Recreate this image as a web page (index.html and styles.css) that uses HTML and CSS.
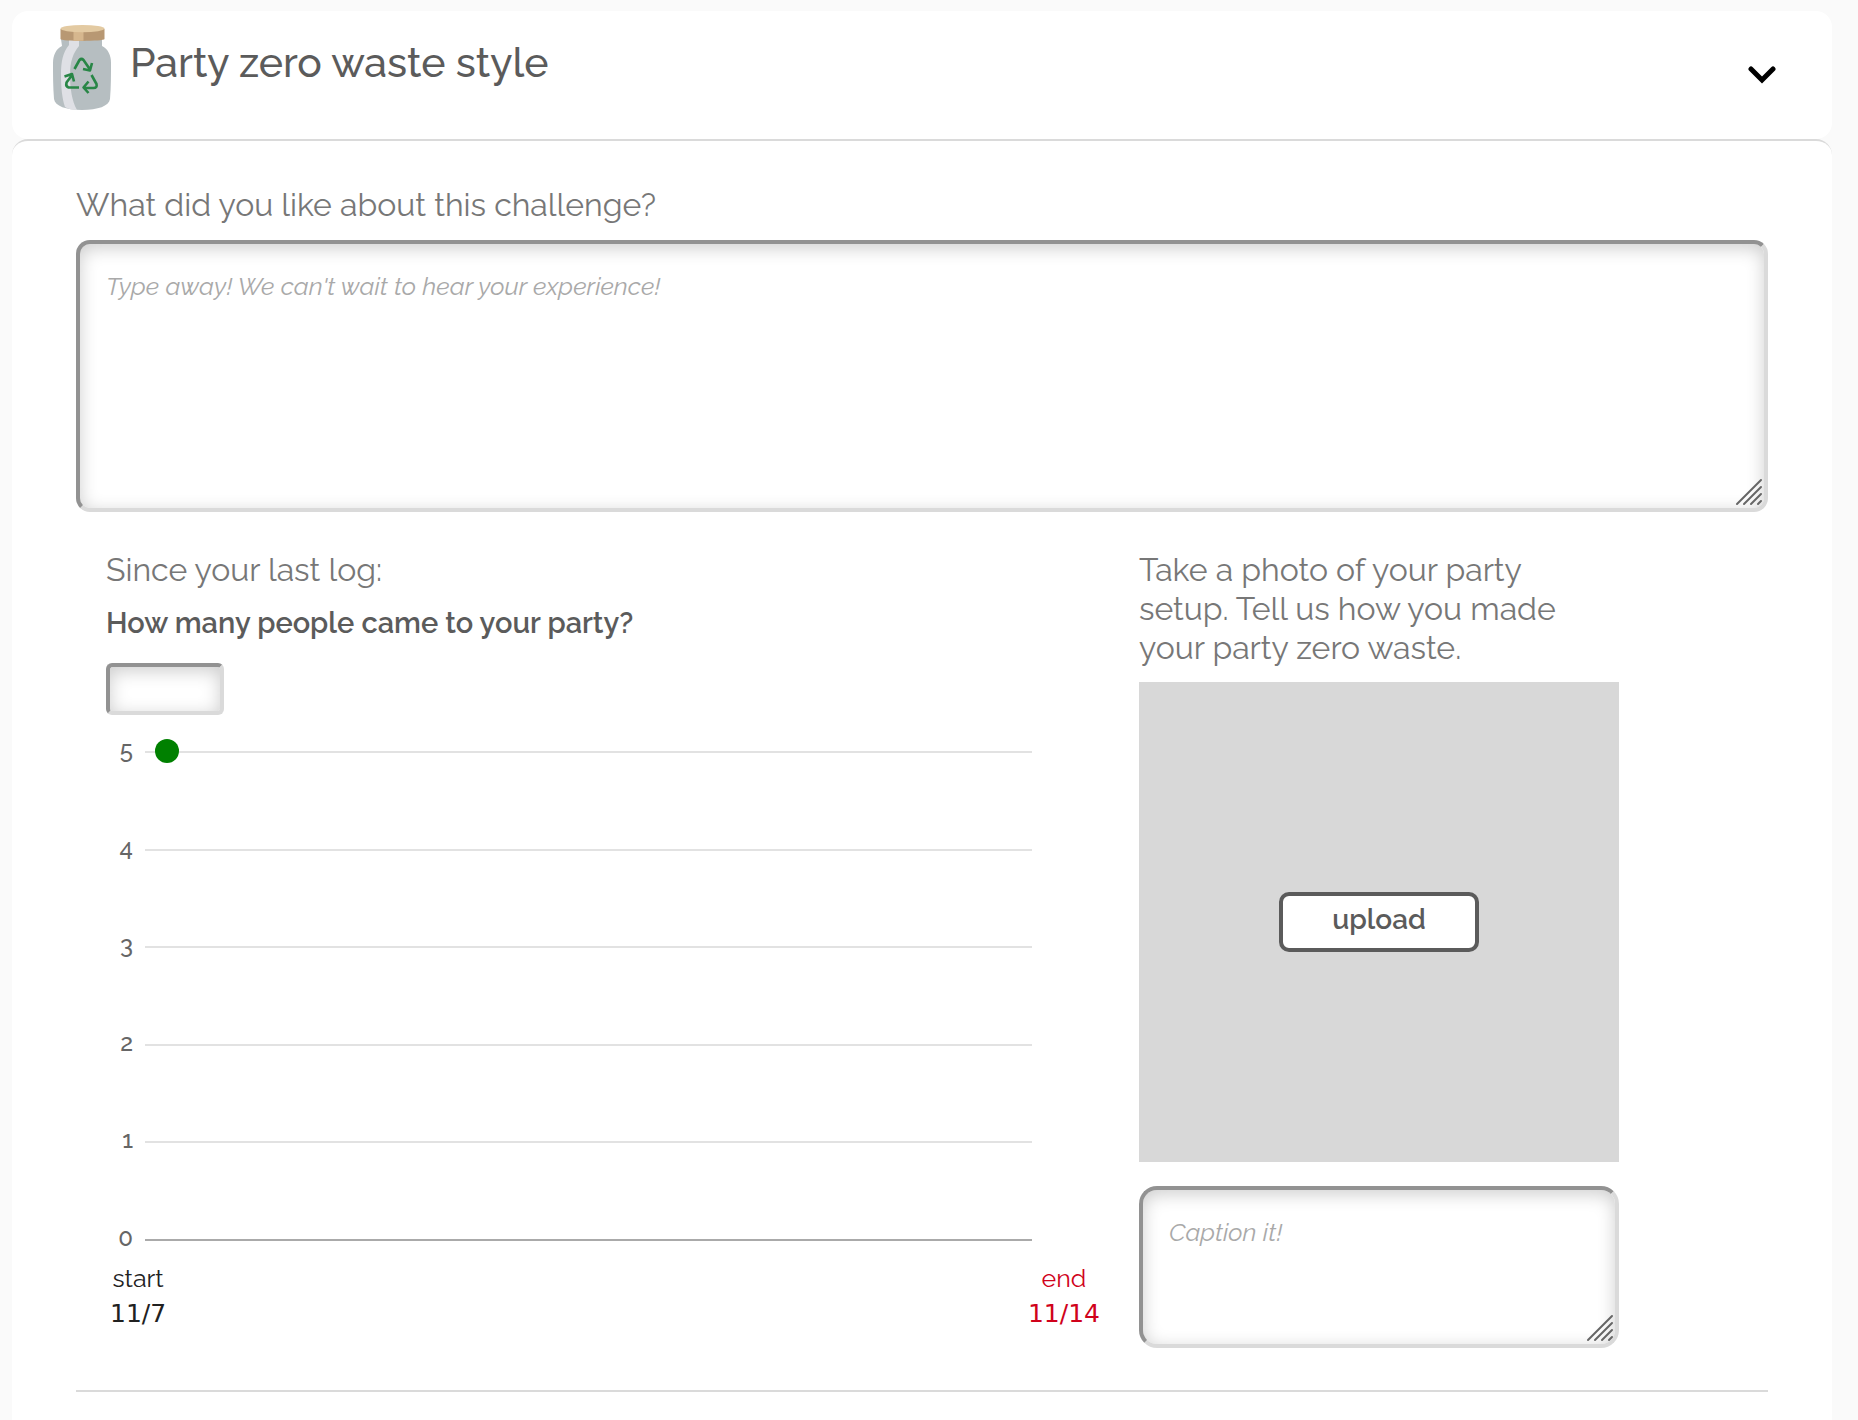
FILE: index.html
```html
<!DOCTYPE html>
<html lang="en">
<head>
<meta charset="utf-8">
<title>Party zero waste style</title>
<link rel="stylesheet" href="styles.css">
</head>
<body>
<main class="challenge">
  <header class="challenge-header">
    <svg class="jar" viewBox="0 0 58 85" aria-hidden="true">
      <path fill="#b6bec1" d="M8 14h41v7c6 3 9 9 9 17 0 12 0 24-1 36-1 7-12 11-28 11S2 81 1 74C0 62 0 50 0 38c0-8 3-14 9-17z"/>
      <path fill="#dfe0e5" d="M16 14h10v7c-6 7-9 16-9 28 0 15 2 27 7 36-5 0-9-1-12-3C9 73 8 62 8 50c0-14 2-23 8-30z"/>
      <path fill="#b89873" d="M7.500 4h44v10c0 2.500-44 2.500-44 0z"/>
      <path fill="#d6b78e" d="M20.500 5h10v10.800h-10z"/>
      <ellipse cx="29.500" cy="3.600" rx="22" ry="3.600" fill="#e3caa2"/>
      <g fill="none" stroke="#288646" stroke-width="2.600" stroke-linejoin="round">
        <path d="M21.500 44l5-9q2-2 4 0l6.500 9.500M30 44l7 1.500 2-7.500"/>
        <path d="M38.500 50l5 9q1 4-3 4H31M35.500 56.500L30.500 62.500l5 5.500"/>
        <path d="M26 62.500H15.500q-3-1-2-5l6-8M11.500 51.500l7.500-2.500 2 7.500"/>
      </g>
    </svg>
    <h1 class="title">Party zero waste style</h1>
    <button class="toggle" type="button" aria-label="Collapse">
      <svg viewBox="0 0 28 18" aria-hidden="true"><path d="M3 3l11 11L25 3" fill="none" stroke="#000" stroke-width="5" stroke-linecap="round"/></svg>
    </button>
  </header>
  <form class="challenge-body">
    <label class="prompt" for="experience">What did you like about this challenge?</label>
    <div class="field">
      <textarea class="box box-large" id="experience" placeholder="Type away! We can't wait to hear your experience!"></textarea>
      <svg class="grip" viewBox="0 0 28 28" aria-hidden="true"><path d="M2 26L26 2M9 26L26 9M16 26L26 16M23 26l3-3" fill="none" stroke="#666" stroke-width="2" stroke-linecap="round"/></svg>
    </div>
    <div class="columns">
      <section class="log">
        <p class="prompt">Since your last log:</p>
        <label class="question" for="people">How many people came to your party?</label>
        <input class="box box-number" id="people" type="text" inputmode="numeric">
        <div class="chart">
          <div class="tick"><span>5</span><i class="line"><b class="dot"></b></i></div>
          <div class="tick"><span>4</span><i class="line"></i></div>
          <div class="tick"><span>3</span><i class="line"></i></div>
          <div class="tick"><span>2</span><i class="line"></i></div>
          <div class="tick"><span>1</span><i class="line"></i></div>
          <div class="tick"><span>0</span><i class="line line-base"></i></div>
        </div>
        <div class="range">
          <p class="date">start<strong>11/7</strong></p>
          <p class="date date-end">end<strong>11/14</strong></p>
        </div>
      </section>
      <section class="photo">
        <p class="prompt">Take a photo of your party setup. Tell us how you made your party zero waste.</p>
        <div class="preview"><button class="upload" type="button">upload</button></div>
        <div class="field">
          <textarea class="box box-caption" aria-label="Caption" placeholder="Caption it!"></textarea>
          <svg class="grip" viewBox="0 0 28 28" aria-hidden="true"><path d="M2 26L26 2M9 26L26 9M16 26L26 16M23 26l3-3" fill="none" stroke="#666" stroke-width="2" stroke-linecap="round"/></svg>
        </div>
      </section>
    </div>
    <hr class="rule">
  </form>
</main>
</body>
</html>
```
FILE: styles.css
```css
* { box-sizing: border-box; }
body {
  margin: 0;
  padding: 11px 26px 0 12px;
  background: #fafafa;
  color: #5b5b5b;
  font-family: Raleway, "Open Sans", sans-serif;
}
p, h1 { margin: 0; }
.challenge { display: flex; flex-direction: column; min-height: calc(100vh - 11px); }
.challenge-header {
  display: flex;
  align-items: flex-start;
  min-height: 128px;
  padding: 14px 56px 0 41px;
  background: #fff;
  border-radius: 16px;
}
.jar { width: 58px; height: 85px; margin-right: 19px; }
.title { flex: 1; padding-top: 14px; font-size: 41px; line-height: 48px; font-weight: 500; }
.toggle { display: flex; margin-top: 41px; padding: 0; border: 0; background: none; }
.toggle svg { width: 28px; height: 18px; }
.challenge-body {
  flex: 1;
  padding: 44px 64px 0;
  background: #fff;
  border-top: 2px solid #dadada;
  border-radius: 16px 16px 0 0;
}
.prompt { display: block; color: #777; font-size: 32px; line-height: 39px; }
.field { position: relative; margin-top: 16px; }
.grip { position: absolute; right: 5px; bottom: 6px; width: 28px; height: 28px; pointer-events: none; }
.box {
  display: block;
  width: 100%;
  border: 4px solid;
  border-color: #929292 #dadada #dadada #929292;
  border-radius: 14px;
  background: #fff;
  box-shadow: inset 0 4px 18px rgba(0, 0, 0, .2);
  padding: 26px;
  color: #5b5b5b;
  font: 25px/32px Raleway, "Open Sans", sans-serif;
  resize: none;
}
.box::placeholder { color: #a9a9a9; font-style: italic; opacity: 1; }
.box-large { height: 272px; }
.box-number { width: 118px; height: 52px; margin-top: 22px; padding: 4px 8px; border-radius: 6px; }
.box-caption { height: 162px; border-radius: 18px; }
.columns {
  display: grid;
  grid-template-columns: 1fr 480px;
  gap: 39px;
  padding: 38px 149px 0 30px;
}
.question { display: block; margin-top: 16px; font-size: 29px; line-height: 36px; font-weight: 600; }
.chart {
  display: flex;
  flex-direction: column;
  justify-content: space-between;
  height: 516px;
  margin-top: 23px;
  padding-right: 68px;
}
.tick { display: flex; align-items: center; gap: 12px; height: 28px; font-size: 24px; line-height: 24px; color: #666; }
.tick span { width: 27px; padding-bottom: 4px; text-align: right; font-weight: 500; }
.line { position: relative; flex: 1; height: 2px; background: #e2e2e2; }
.line-base { background: #aaa; }
.dot { position: absolute; left: 10px; top: -12px; width: 24px; height: 24px; border-radius: 50%; background: green; }
.range { display: flex; justify-content: space-between; margin-top: 6px; padding-left: 4px; }
.date { color: #212121; font-size: 25px; line-height: 36px; text-align: center; }
.date strong { display: block; font-family: "DejaVu Sans", sans-serif; font-weight: 400; }
.date-end { color: #d0021b; }
.photo .prompt { max-width: 440px; }
.preview {
  display: flex;
  align-items: center;
  justify-content: center;
  height: 480px;
  margin-top: 15px;
  background: #d8d8d8;
}
.photo .field { margin-top: 24px; }
.upload {
  width: 200px;
  height: 60px;
  padding: 0 0 4px;
  border: 4px solid #5b5b5b;
  border-radius: 10px;
  background: #fff;
  color: #5b5b5b;
  font: 600 28px/36px Raleway, "Open Sans", sans-serif;
}
.rule { margin: 42px 0 0; border: 0; border-top: 2px solid #dadada; }
```
